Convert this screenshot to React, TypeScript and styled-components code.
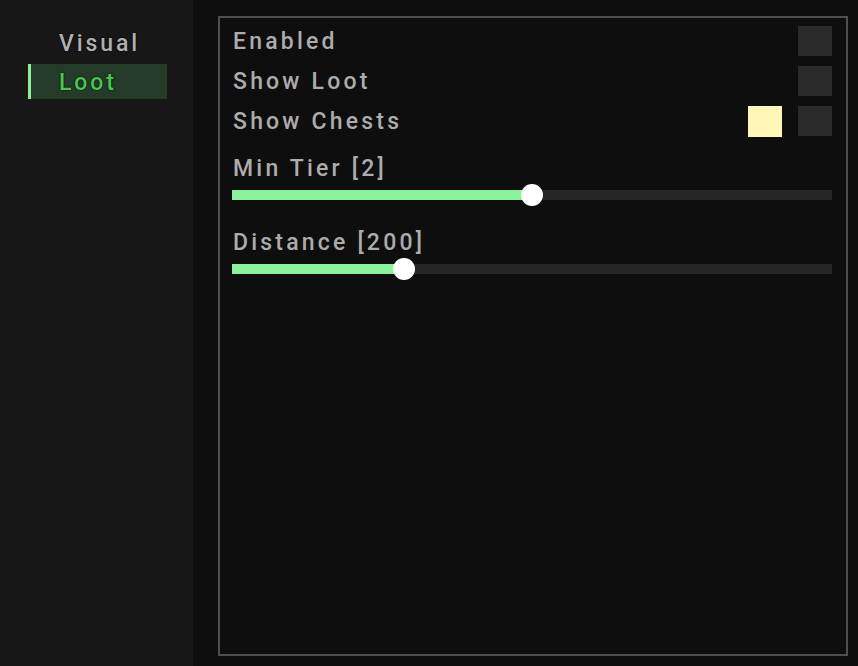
import styled, { createGlobalStyle } from "styled-components";

const GREEN = "#8af09a";

const GlobalStyle = createGlobalStyle`
    body {
        margin: 0;
        background: #0e0e0e;
        font-family: Roboto, "Liberation Sans", sans-serif;
    }
`;

type Slide = { label: string; value: number };

const toggles = ["Enabled", "Show Loot", "Show Chests"];
const sliders: Slide[] = [
    { label: "Min Tier [2]", value: 0.5 },
    { label: "Distance [200]", value: 0.287 },
];

export default function App() {
    return (
        <Layout>
            <GlobalStyle />
            <Sidebar>
                <NavItem>Visual</NavItem>
                <NavItem $active>Loot</NavItem>
            </Sidebar>
            <Main>
                <Panel>
                    {toggles.map((t) => (
                        <Row key={t}>
                            <Label>{t}</Label>
                            {t === "Show Chests" && <Swatch />}
                            <Check />
                        </Row>
                    ))}
                    {sliders.map((s) => (
                        <SliderBlock key={s.label}>
                            <Label>{s.label}</Label>
                            <Track>
                                <Fill style={{ width: `${s.value * 100}%` }}>
                                    <Knob />
                                </Fill>
                            </Track>
                        </SliderBlock>
                    ))}
                </Panel>
            </Main>
        </Layout>
    );
}

const Layout = styled.div`
    display: flex;
    width: 858px;
    height: 666px;
    overflow: hidden;
`;

const Sidebar = styled.nav`
    width: 193px;
    flex-shrink: 0;
    background: #171717;
    display: flex;
    flex-direction: column;
    gap: 4px;
    padding: 25px 0 0 28px;
    box-sizing: border-box;
`;

const NavItem = styled.div<{ $active?: boolean }>`
    width: 139px;
    height: 35px;
    box-sizing: border-box;
    display: flex;
    align-items: center;
    padding: 1px 0 0 28px;
    font-size: 23px;
    font-weight: 500;
    letter-spacing: 2.9px;
    color: ${(p) => (p.$active ? "#48c850" : "#b0b0b0")};
    background: ${(p) => (p.$active ? "#263a2a" : "transparent")};
    border-left: 3px solid ${(p) => (p.$active ? GREEN : "transparent")};
    text-shadow: 0 0 2px #000;
`;

const Main = styled.main`
    flex: 1;
    display: flex;
    padding: 16px 10px 10px 25px;
    background: #0e0e0e;
`;

const Panel = styled.section`
    flex: 1;
    border: 2px solid #4e4e4e;
    background: #0e0e0e;
    padding: 8px 14px 0 13px;
    display: flex;
    flex-direction: column;
    gap: 10px;
`;

const Row = styled.div`
    display: flex;
    align-items: center;
    gap: 16px;
    height: 30px;
`;

const Label = styled.div`
    flex: 1;
    font-size: 23px;
    font-weight: 500;
    letter-spacing: 3.2px;
    color: #acacac;
    line-height: 26px;
    padding-top: 2px;
`;

const Check = styled.div`
    width: 34px;
    height: 30px;
    background: #2a2a2a;
`;

const Swatch = styled.div`
    width: 34px;
    height: 31px;
    background: #fff6b8;
`;

const SliderBlock = styled.div`
    display: flex;
    flex-direction: column;
    gap: 8px;
    margin: 8px 0 10px;
`;

const Track = styled.div`
    height: 10px;
    background: #262626;
    margin-left: -1px;
`;

const Fill = styled.div`
    position: relative;
    height: 100%;
    background: ${GREEN};
`;

const Knob = styled.div`
    position: absolute;
    right: -11px;
    top: -6px;
    width: 22px;
    height: 22px;
    border-radius: 50%;
    background: #fff;
`;
